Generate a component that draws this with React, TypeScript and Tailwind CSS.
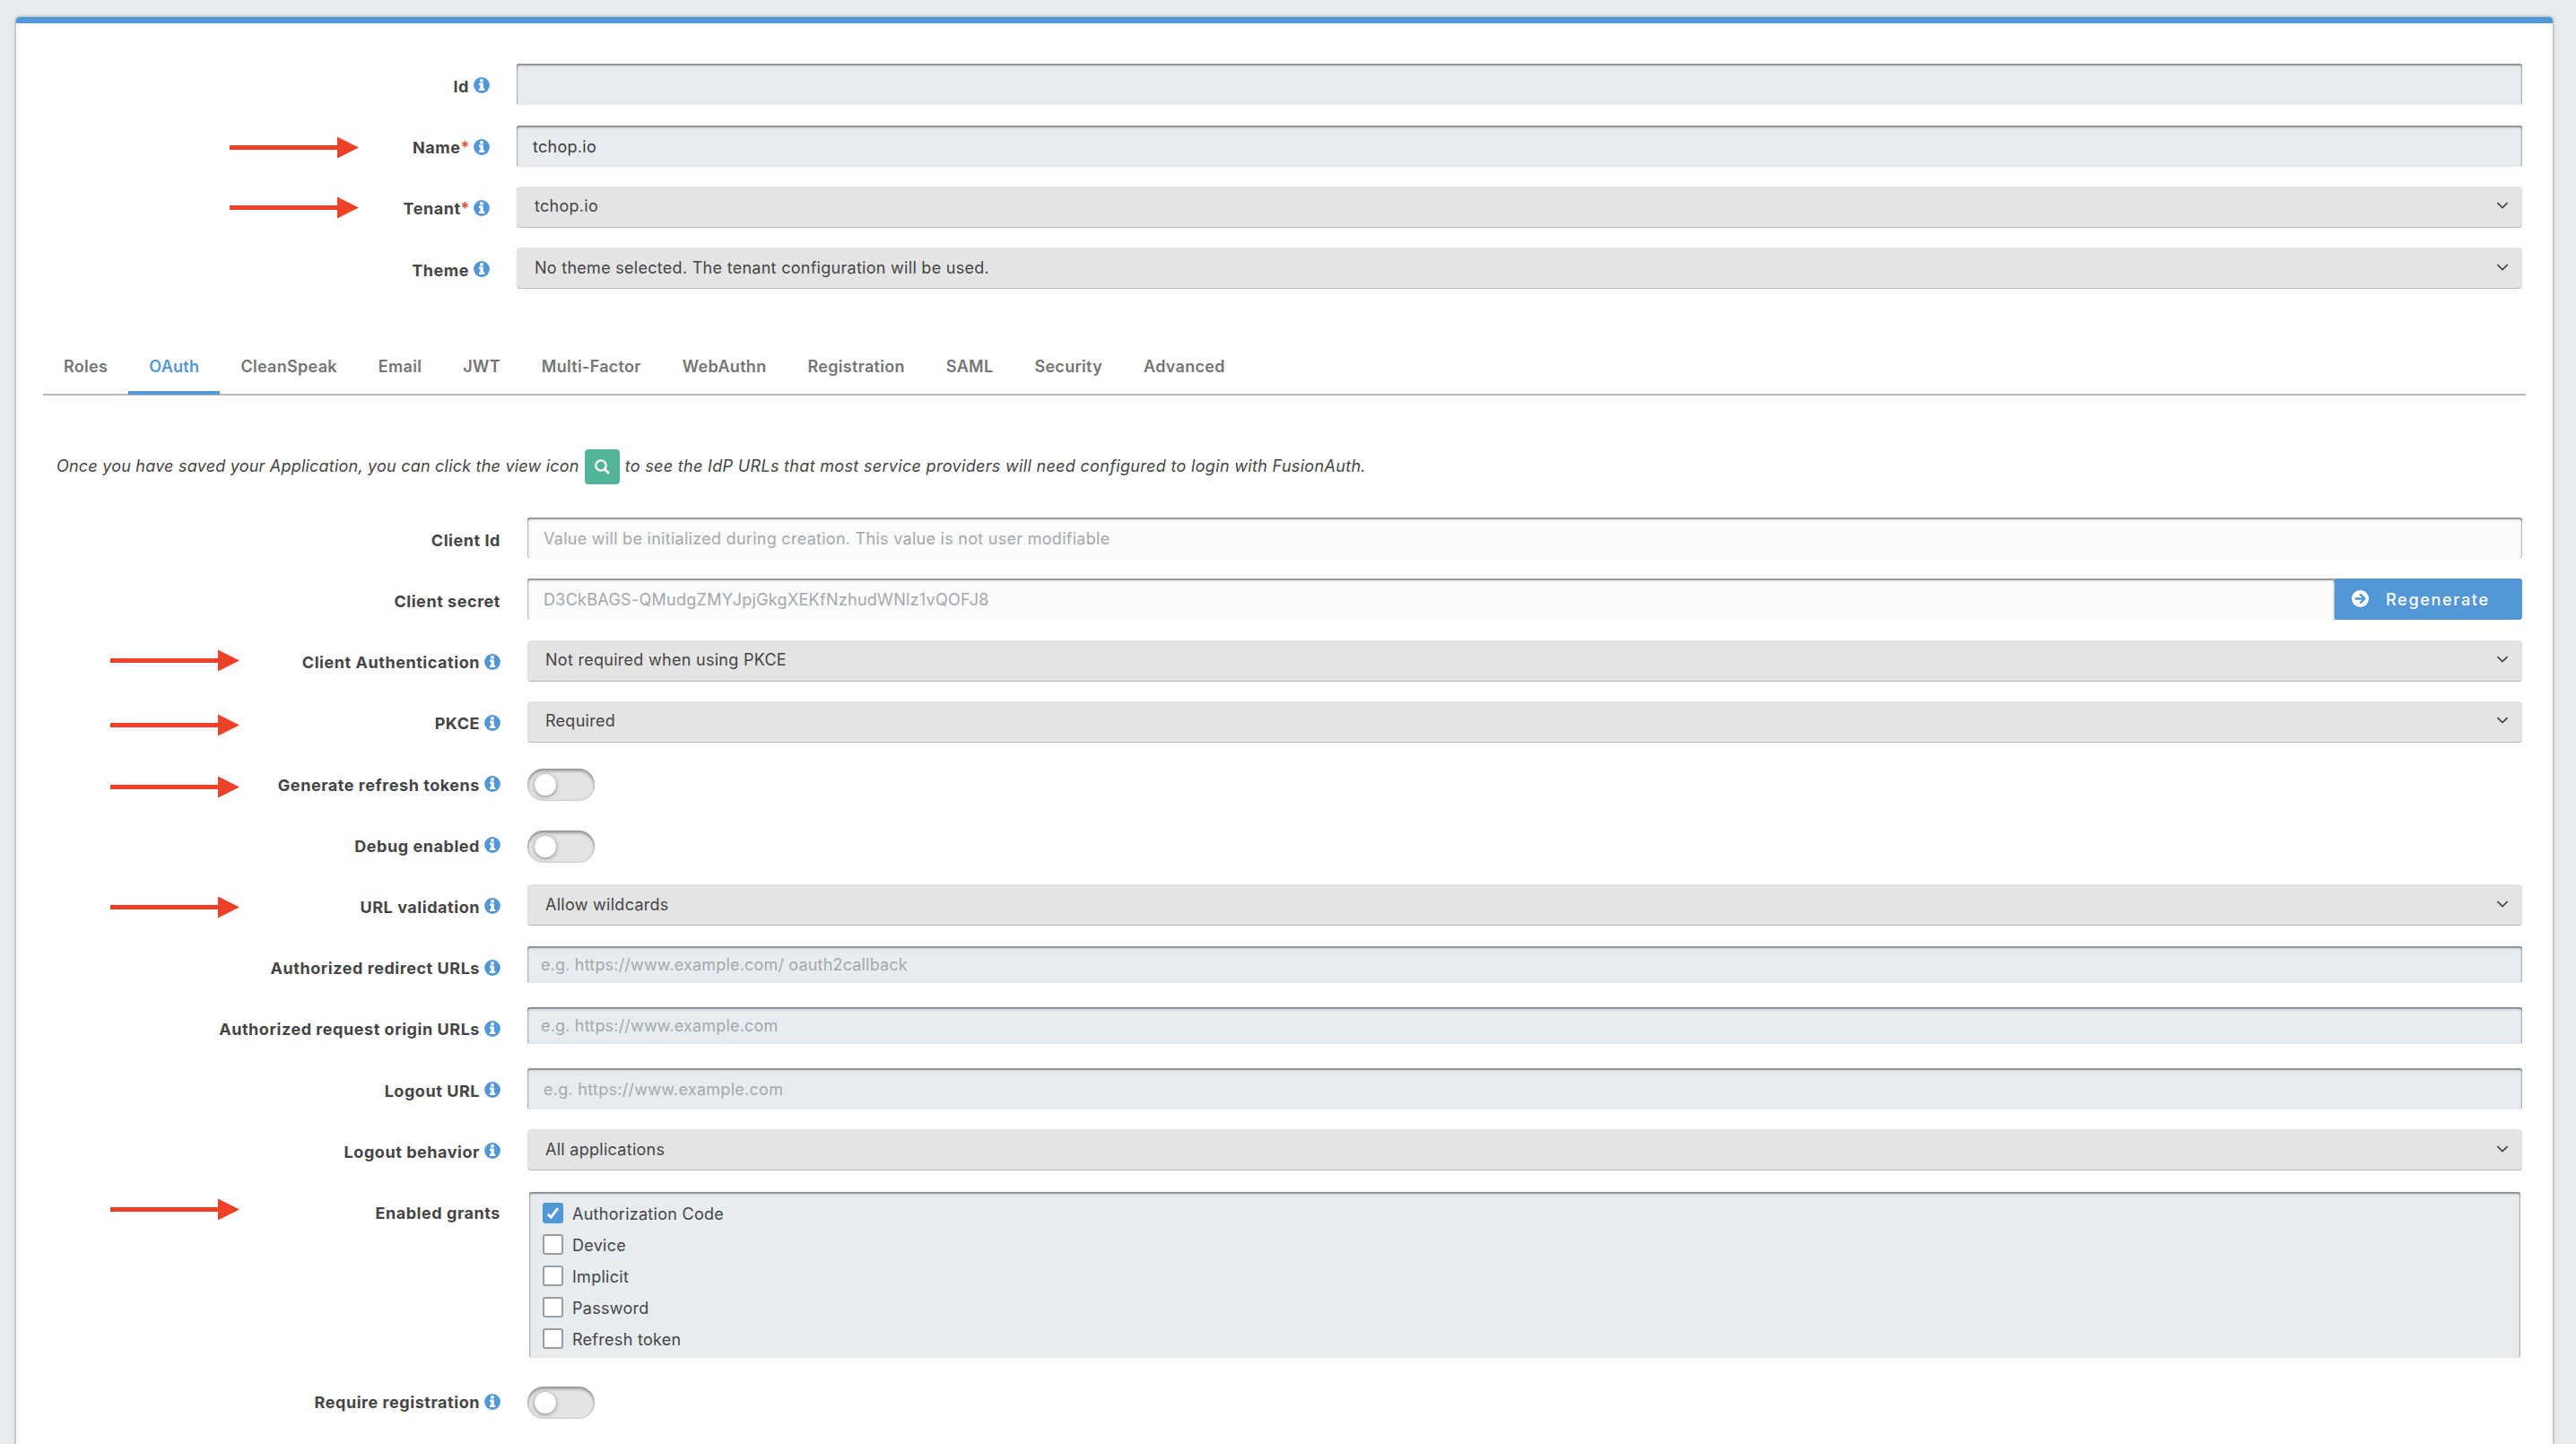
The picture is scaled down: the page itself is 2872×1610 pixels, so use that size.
import { clsx } from 'clsx';
import type { ReactNode } from 'react';

const inset =
	'shadow-[inset_0_2px_0_rgba(70,70,70,0.38),inset_0_2px_3px_rgba(70,70,70,0.32),inset_2px_0_1px_-1px_rgba(70,70,70,0.3),inset_-2px_0_1px_-1px_rgba(70,70,70,0.3)]';

const Arrow = () => (
	<svg className="h-[25px] w-36" viewBox="0 0 144 25">
		<path d="M0 10h120V0.5l24 12-24 12V15H0z" fill="#ee4127" />
	</svg>
);

const InfoIcon = () => (
	<svg className="-mt-[3px] ml-[5px] h-[18px] w-[18px] shrink-0" viewBox="0 0 18 18">
		<circle cx="9" cy="9" r="8.9" fill="#5297d6" />
		<path
			d="M7.2 2.2h3.5v3.2H7.2zM6 6.6h4.8v5.9h1.4v2.4H6v-2.4h1.4V9H6z"
			fill="#fff"
		/>
	</svg>
);

const SearchIcon = () => (
	<svg className="h-[17px] w-[17px]" viewBox="0 0 17 17" fill="none" stroke="#fff">
		<circle cx="7" cy="7" r="5.7" strokeWidth="2.3" />
		<path d="M11 11l5 5" strokeWidth="2.6" />
	</svg>
);

const ArrowCircleIcon = () => (
	<svg className="-mt-[3px] h-[19px] w-[19px]" viewBox="0 0 19 19">
		<circle cx="9.5" cy="9.5" r="9.5" fill="#fff" />
		<path
			d="M3.6 9.5h10.6M9.2 4.4l5.1 5.1-5.1 5.1"
			fill="none"
			stroke="#5297d6"
			strokeWidth="2.3"
		/>
	</svg>
);

const Chevron = () => (
	<svg className="-mt-0.5 h-2 w-3.5" viewBox="0 0 14 8">
		<path d="M1.4 1.2L7 6.6l5.6-5.4" fill="none" stroke="#444" strokeWidth="1.7" />
	</svg>
);

type RowProps = {
	label: string;
	required?: boolean;
	info?: boolean;
	arrow?: string;
	wide?: boolean;
	children: ReactNode;
};

const Row = ({ label, required, info = true, arrow, wide, children }: RowProps) => (
	<div className="flex min-h-[68.22px] items-start">
		<div
			className={clsx(
				'flex shrink-0 items-start justify-between',
				wide ? 'w-[498px] pl-[208px]' : 'w-[510px] pl-[75px]',
			)}
		>
			{arrow ? (
				<div className={arrow}>
					<Arrow />
				</div>
			) : null}
			<div className="ml-auto flex h-[51px] items-center font-bold tracking-[0.55px]">
				<span className="whitespace-nowrap">
					{label}
					{required ? (
						<span className="font-medium tracking-normal text-[#e8402b]">*</span>
					) : null}
				</span>
				{info ? <InfoIcon /> : null}
			</div>
		</div>
		<div className="min-w-0 flex-1 pl-[30px]">{children}</div>
	</div>
);

type InputProps = {
	value?: string;
	placeholder?: string;
	disabled?: boolean;
	compact?: boolean;
};

const Input = ({ value, placeholder, disabled, compact }: InputProps) => (
	<div
		className={clsx(
			'flex items-center rounded-[3px] pt-0.5',
			inset,
			disabled ? 'bg-[#fafbfd]' : 'bg-[#e7ecf0]',
			compact ? 'h-[41px] px-[15px] tracking-[0.18px]' : 'h-[46px] px-[18px]',
		)}
	>
		<span className={value ? 'text-[#3c3c3c]' : 'text-[#a5a8aa]'}>
			{value ?? placeholder}
		</span>
	</div>
);

const Select = ({ value }: { value: string }) => (
	<div className="flex h-[45px] items-center justify-between rounded-[4px] bg-[#e4e4e4] pr-[15px] pl-5 shadow-[0_1px_1px_rgba(0,0,0,0.3)]">
		<span>{value}</span>
		<Chevron />
	</div>
);

const Toggle = () => (
	<div className="mt-[7.3px] flex h-9 w-[75px] items-center rounded-full bg-[#e4e4e4] pl-2 shadow-[inset_0_3px_3px_rgba(60,60,60,0.4),inset_0_0_3px_rgba(60,60,60,0.3)]">
		<div className="h-6 w-6 rounded-full bg-white shadow-[0_1px_4px_rgba(60,60,60,0.6)]" />
	</div>
);

const tabs = [
	'Roles',
	'OAuth',
	'CleanSpeak',
	'Email',
	'JWT',
	'Multi-Factor',
	'WebAuthn',
	'Registration',
	'SAML',
	'Security',
	'Advanced',
];

const grants = ['Authorization Code', 'Device', 'Implicit', 'Password', 'Refresh token'];

const Checkbox = ({ checked }: { checked: boolean }) => (
	<span
		className={clsx(
			'-mt-0.5 flex h-[23px] w-[23px] items-center justify-center rounded-[3px]',
			checked ? 'bg-[#5297d6]' : 'border-2 border-[#9b9da0] bg-white',
		)}
	>
		{checked ? (
			<svg className="h-[17px] w-[17px]" viewBox="0 0 17 17">
				<path d="M2.8 9.8l3.6 3.4L14 3" fill="none" stroke="#fff" strokeWidth="2.8" />
			</svg>
		) : null}
	</span>
);

export default function App() {
	return (
		<div className="h-[1610px] overflow-hidden bg-[#e7ecf0] pt-[19px] pr-[26px] pl-[18px] font-[Inter,sans-serif] text-[18px] leading-6 tracking-[0.28px] text-[#454545]">
			<main className="h-[1640px] rounded-t-[4px] border-t-[7px] border-[#5297d6] bg-white pr-[30px] pl-[30px] shadow-[0_0_4px_rgba(0,0,0,0.4)]">
				<section className="pt-[45.4px] pr-1">
					<Row label="Id" wide>
						<Input />
					</Row>
					<Row label="Name" required wide arrow="mt-[12px]">
						<Input value="tchop.io" />
					</Row>
					<Row label="Tenant" required wide arrow="mt-[11px]">
						<Select value="tchop.io" />
					</Row>
					<Row label="Theme" wide>
						<Select value="No theme selected. The tenant configuration will be used." />
					</Row>
				</section>

				<nav className="mt-[32.7px] flex h-[64px] border-b-2 border-[#b9b9b9] tracking-[0.3px] text-[#757575]">
					{tabs.map((tab) => (
						<a
							key={tab}
							className={clsx(
								'h-[63px] px-[23px] pt-[20px] font-semibold',
								tab === 'OAuth' && 'border-b-4 border-[#5297d6] text-[#5297d6]',
							)}
						>
							{tab}
						</a>
					))}
				</nav>

				<p className="mt-[60px] flex h-[39px] items-center pl-[15px] whitespace-nowrap italic">
					<span className="tracking-[0.21px]">
						Once you have saved your Application, you can click the view icon
					</span>
					<span className="mx-1.5 flex h-[39px] w-[39px] items-center justify-center rounded-[4px] bg-[#52b498]">
						<SearchIcon />
					</span>
					<span className="tracking-[0.32px]">
						to see the IdP URLs that most service providers will need configured to login with
						FusionAuth.
					</span>
				</p>

				<section className="mt-[37.2px] pr-1">
					<Row label="Client Id" info={false}>
						<Input
							disabled
							placeholder="Value will be initialized during creation. This value is not user modifiable"
						/>
					</Row>
					<Row label="Client secret" info={false}>
						<div className="flex">
							<div className="flex-1">
								<Input disabled placeholder="D3CkBAGS-QMudgZMYJpjGkgXEKfNzhudWNlz1vQOFJ8" />
							</div>
							<button className="flex h-[46px] w-[209px] items-center rounded-r-[3px] bg-[#5297d6] pt-px pl-[19px] tracking-[1.7px] text-white">
								<ArrowCircleIcon />
								<span className="ml-[19px] font-medium">Regenerate</span>
							</button>
						</div>
					</Row>
					<Row label="Client Authentication" arrow="mt-[10px]">
						<Select value="Not required when using PKCE" />
					</Row>
					<Row label="PKCE" arrow="mt-[14px]">
						<Select value="Required" />
					</Row>
					<Row label="Generate refresh tokens" arrow="mt-[15px]">
						<Toggle />
					</Row>
					<Row label="Debug enabled">
						<Toggle />
					</Row>
					<Row label="URL validation" arrow="mt-[13px]">
						<Select value="Allow wildcards" />
					</Row>
					<Row label="Authorized redirect URLs">
						<Input compact placeholder="e.g. https://www.example.com/ oauth2callback" />
					</Row>
					<Row label="Authorized request origin URLs">
						<Input compact placeholder="e.g. https://www.example.com" />
					</Row>
					<Row label="Logout URL">
						<Input placeholder="e.g. https://www.example.com" />
					</Row>
					<Row label="Logout behavior">
						<Select value="All applications" />
					</Row>
					<Row label="Enabled grants" info={false} arrow="mt-[8px]">
						<ul
							className={clsx(
								'mx-0.5 mt-px h-[185px] rounded-[3px] bg-[#e7ecf0] pt-[7px] pl-[15px]',
								inset,
							)}
						>
							{grants.map((grant, i) => (
								<li key={grant} className="flex h-[35.2px] items-center gap-2.5">
									<Checkbox checked={i === 0} />
									<span className="pt-px">{grant}</span>
								</li>
							))}
						</ul>
					</Row>
					<div className="mt-[25px]">
						<Row label="Require registration">
							<Toggle />
						</Row>
					</div>
				</section>
			</main>
		</div>
	);
}
